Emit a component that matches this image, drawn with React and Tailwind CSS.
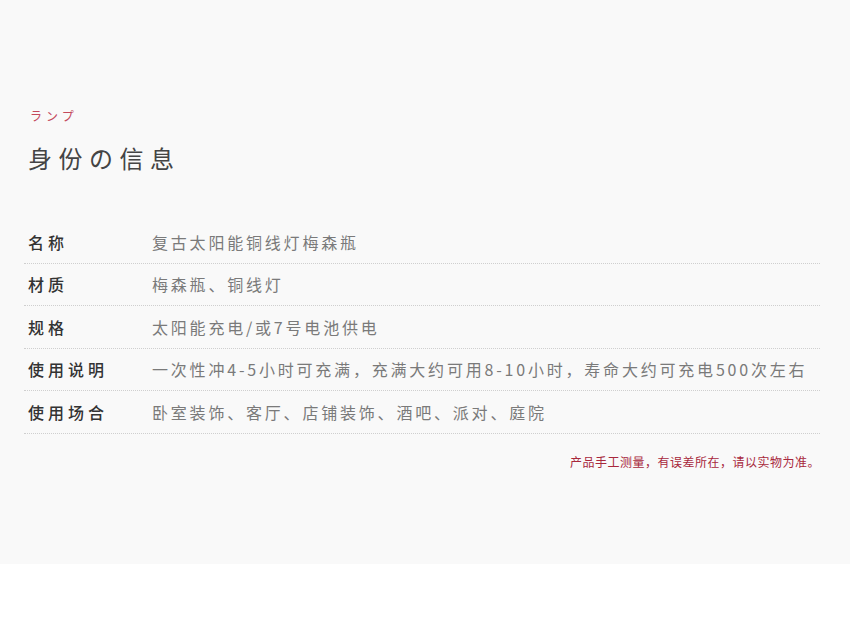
export default function App() {
  const rows = [
    ["名称", "复古太阳能铜线灯梅森瓶"],
    ["材质", "梅森瓶、铜线灯"],
    ["规格", "太阳能充电/或7号电池供电"],
    ["使用说明", "一次性冲4-5小时可充满，充满大约可用8-10小时，寿命大约可充电500次左右"],
    ["使用场合", "卧室装饰、客厅、店铺装饰、酒吧、派对、庭院"],
  ];
  return (
    <div className="w-[850px] h-[628px] bg-white" style={{ fontFamily: '"Noto Sans CJK SC", "Noto Sans", sans-serif' }}>
      <div className="h-[564px] bg-[#f9f9f9] pt-[106px] px-6">
        <div className="pl-[6px] text-[12px] leading-[20px] tracking-[4px] text-[#c44a5c]">ランプ</div>
        <div className="mt-[16px] pl-[4px] text-[24px] leading-[32px] tracking-[6.5px] text-[#444] font-normal">身份の信息</div>
        <div className="mt-[47px] w-[796px]">
          {rows.map(([k, v], i) => (
            <div key={i} className="flex items-center h-[42.5px] border-b border-dotted border-[#cfcfcf]">
              <div className="w-[128px] pl-[4px] text-[16px] tracking-[4px] text-[#333] font-medium">{k}</div>
              <div className="text-[16px] tracking-[2.8px] text-[#7a7a7a]">{v}</div>
            </div>
          ))}
        </div>
        <div className="mt-[19px] w-[796px] text-right text-[12px] tracking-[0.5px] text-[#a8283c]">产品手工测量，有误差所在，请以实物为准。</div>
      </div>
    </div>
  );
}
